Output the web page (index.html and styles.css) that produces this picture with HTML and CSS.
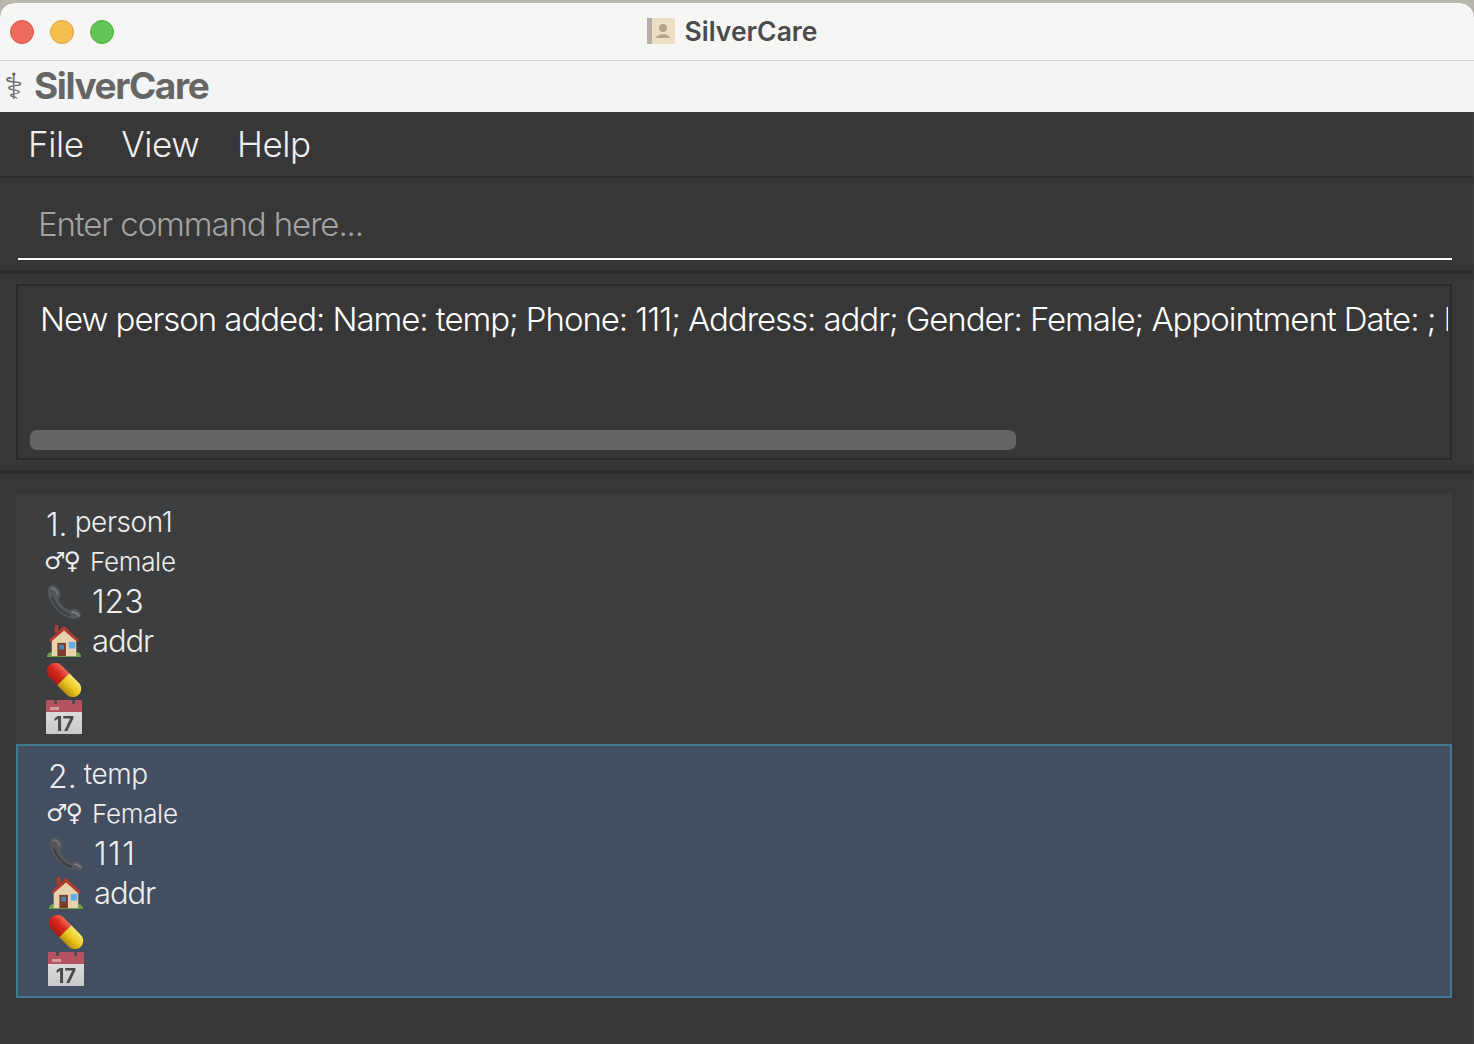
FILE: index.html
```html
<!DOCTYPE html>
<html lang="en">
<head>
<meta charset="utf-8">
<title>SilverCare</title>
<link rel="stylesheet" href="styles.css">
</head>
<body>
<svg class="defs" width="0" height="0" aria-hidden="true">
  <defs>
    <linearGradient id="pillRed" x1="0" y1="0" x2="0" y2="1">
      <stop offset="0" stop-color="#f0695a"/>
      <stop offset=".45" stop-color="#d8281c"/>
      <stop offset="1" stop-color="#a81a12"/>
    </linearGradient>
    <linearGradient id="pillYellow" x1="0" y1="0" x2="0" y2="1">
      <stop offset="0" stop-color="#f8e66a"/>
      <stop offset=".5" stop-color="#ecc81e"/>
      <stop offset="1" stop-color="#b58f12"/>
    </linearGradient>
    <linearGradient id="calBody" x1="0" y1="0" x2="0" y2="1">
      <stop offset="0" stop-color="#e4e4e4"/>
      <stop offset="1" stop-color="#c9c9c9"/>
    </linearGradient>
    <symbol id="phone" viewBox="0 0 36 36">
      <path d="M3 1 C7 -1 12 2 14 7 C15 11 13 14 12 16 C15 21 19 25 24 27 C26 25 29 24 32 26 C35 28 37 32 35 34 C32 37 26 36 21 34 C12 30 4 20 1 10 C0 6 1 3 3 1 Z" fill="#53565b"/>
      <path d="M4 4 C7 2 11 6 11 10" fill="none" stroke="#72757b" stroke-width="2"/>
      <path d="M5 12 C8 21 15 29 24 32" fill="none" stroke="#3c3e42" stroke-width="2.4"/>
      <path d="M26 29 C29 28 32 30 34 33" fill="none" stroke="#7b7e83" stroke-width="2"/>
    </symbol>
    <symbol id="house" viewBox="0 0 36 36">
      <path d="M0 35 C0 30 4 29 7 31 L29 31 C32 29 36 30 36 35 Z" fill="#6a9f4c"/>
      <path d="M5 16 L18 5 L31 16 L31 34 L5 34 Z" fill="#e8d2ad"/>
      <rect x="8" y="1" width="4" height="8" fill="#a8402f"/>
      <path d="M2 17 L18 2 L34 17 L32 19 L18 7 L4 19 Z" fill="#b23c2c"/>
      <rect x="11" y="20" width="9" height="14" fill="#7c3a28"/>
      <rect x="13" y="22" width="5" height="5" fill="#4b86b5"/>
      <rect x="23" y="19" width="7" height="7" fill="#62aee2"/>
    </symbol>
    <symbol id="pill" viewBox="0 0 36 36">
      <g transform="rotate(45 18 18)">
        <path d="M17 9 L5 9 C0 9 -4 13 -4 18 C-4 23 0 27 5 27 L17 27 Z" fill="url(#pillRed)"/>
        <path d="M17 9 L31 9 C36 9 40 13 40 18 C40 23 36 27 31 27 L17 27 Z" fill="url(#pillYellow)"/>
      </g>
    </symbol>
    <symbol id="calendar" viewBox="0 0 36 34">
      <rect x="0" y="0" width="36" height="34" fill="url(#calBody)"/>
      <rect x="0" y="0" width="36" height="12" fill="#b5525f"/>
      <rect x="8" y="0" width="3" height="4" fill="#5a4a4f"/>
      <rect x="26" y="0" width="3" height="4" fill="#5a4a4f"/>
      <rect x="4" y="7" width="9" height="3" fill="#d79aa2"/>
      <text x="18" y="31" text-anchor="middle" class="cal-num">17</text>
    </symbol>
  </defs>
</svg>
<div class="window">
  <header class="titlebar">
    <div class="lights">
      <span class="light light-red"></span>
      <span class="light light-yellow"></span>
      <span class="light light-green"></span>
    </div>
    <div class="title">
      <svg class="title-icon" viewBox="0 0 28 26" aria-hidden="true">
        <rect width="28" height="26" rx="1" fill="#ecdfc4"/>
        <rect width="5" height="26" fill="#b4b0a9"/>
        <circle cx="16" cy="10" r="4" fill="#b3a78f"/>
        <path d="M9 20 C10 15 22 15 23 20 Z" fill="#b3a78f"/>
      </svg>
      <span class="title-text">SilverCare</span>
    </div>
  </header>
  <div class="appbar">
    <span class="appbar-icon">⚕</span>
    <span class="appbar-name">SilverCare</span>
  </div>
  <main class="app">
    <nav class="menu">
      <span class="menu-item">File</span>
      <span class="menu-item">View</span>
      <span class="menu-item">Help</span>
    </nav>
    <section class="command">
      <div class="command-field">Enter command here...</div>
    </section>
    <section class="result">
      <div class="result-box">
        <div class="result-text">New person added: Name: temp; Phone: 111; Address: addr; Gender: Female; Appointment Date: ; Medicine: ; Tags:</div>
        <div class="scrollthumb"></div>
      </div>
    </section>
    <section class="list">
      <article class="card">
        <div class="row row-name"><span class="index">1.</span><span>person1</span></div>
        <div class="row row-gender"><span class="gender">♂♀</span><span>Female</span></div>
        <div class="row row-field"><svg class="emoji"><use href="#phone"/></svg><span>123</span></div>
        <div class="row row-field"><svg class="emoji"><use href="#house"/></svg><span class="addr">addr</span></div>
        <div class="row row-field"><svg class="emoji"><use href="#pill"/></svg></div>
        <div class="row row-cal"><svg class="emoji"><use href="#calendar"/></svg></div>
      </article>
      <article class="card card-selected">
        <div class="row row-name"><span class="index">2.</span><span>temp</span></div>
        <div class="row row-gender"><span class="gender">♂♀</span><span>Female</span></div>
        <div class="row row-field"><svg class="emoji"><use href="#phone"/></svg><span class="ones">111</span></div>
        <div class="row row-field"><svg class="emoji"><use href="#house"/></svg><span class="addr">addr</span></div>
        <div class="row row-field"><svg class="emoji"><use href="#pill"/></svg></div>
        <div class="row row-cal"><svg class="emoji"><use href="#calendar"/></svg></div>
      </article>
    </section>
  </main>
</div>
</body>
</html>
```
FILE: styles.css
```css
* { box-sizing: border-box; }
html, body { margin: 0; padding: 0; }
body {
  width: 1474px;
  height: 1044px;
  overflow: hidden;
  background: #b9b6ae;
  font-family: "Inter", "Liberation Sans", sans-serif;
}
.defs { display: block; height: 0; }
.cal-num { font: 700 20px "Inter", sans-serif; fill: #4a4a4a; }
.window {
  height: 1041px;
  margin-top: 3px;
  display: flex;
  flex-direction: column;
  background: #373737;
  border-radius: 14px 14px 0 0;
  overflow: hidden;
}
.titlebar {
  height: 58px;
  flex: none;
  display: flex;
  align-items: center;
  justify-content: center;
  background: #f6f6f4;
  border-bottom: 1px solid #cfcfcd;
  position: relative;
}
.lights {
  position: absolute;
  left: 10px;
  top: 17px;
  display: flex;
  gap: 16px;
}
.light { width: 24px; height: 24px; border-radius: 50%; border: 1px solid; }
.light-red { background: #ee6a5f; border-color: #d6544a; }
.light-yellow { background: #f6bd4f; border-color: #dea13a; }
.light-green { background: #61c454; border-color: #4fae43; }
.title { display: flex; align-items: center; gap: 10px; margin-top: -2px; padding-right: 10px; }
.title-icon { width: 28px; height: 26px; }
.title-text { font-size: 26.5px; font-weight: 600; color: #4b4b4b; }
.appbar {
  height: 51px;
  flex: none;
  display: flex;
  align-items: center;
  background: #f4f4f4;
  color: #666;
}
.appbar-icon { width: 34px; padding-left: 4px; font: 36px "DejaVu Sans", sans-serif; white-space: nowrap; overflow: hidden; }
.appbar-name { font-size: 37px; font-weight: 700; letter-spacing: -1.4px; margin-top: -2px; }
.app { flex: 1; display: flex; flex-direction: column; min-height: 0; border-right: 1px solid #3e3e3e; }
.menu {
  height: 66px;
  flex: none;
  display: flex;
  align-items: center;
  gap: 37.5px;
  padding: 0 0 1px 28px;
  background: #373737;
  border-bottom: 2px solid #2b2b2b;
}
.menu-item { font-size: 35px; font-weight: 300; color: #eee; letter-spacing: -.4px; }
.command {
  height: 96px;
  flex: none;
  padding: 0 21px 10px 18px;
  display: flex;
  border-bottom: 4px solid #2b2b2b;
}
.command-field {
  flex: 1;
  display: flex;
  align-items: center;
  padding: 12px 0 0 20px;
  border-bottom: 2px solid #fff;
  color: #a3a3a3;
  font-size: 33px;
  font-weight: 300;
  letter-spacing: -1.1px;
}
.result {
  height: 200px;
  flex: none;
  padding: 10px 21px 10px 16px;
  border-bottom: 4px solid #2b2b2b;
}
.result-box {
  height: 176px;
  position: relative;
  border: 2px solid #2b2b2b;
  padding: 10px 2px 0 22px;
}
.result-text {
  white-space: nowrap;
  overflow: hidden;
  color: #fff;
  font-size: 33px;
  font-weight: 300;
  letter-spacing: -1.05px;
  line-height: 46px;
}
.scrollthumb {
  position: absolute;
  left: 12px;
  top: 144px;
  width: 986px;
  height: 20px;
  border-radius: 7px;
  background: #646464;
}
.list {
  flex: 1;
  padding: 20px 21px 0 16px;
  display: flex;
  flex-direction: column;
}
.card {
  height: 250px;
  padding: 3px 0 0 30px;
  background: #3c3e40;
  color: #eee;
}
.card-selected {
  height: 254px;
  padding: 3px 0 0 30px;
  background: #434e60;
  border: 2px solid #3e7b91;
}
.row { display: flex; align-items: center; font-weight: 300; }
.row-name { height: 45px; padding-top: 4px; gap: 7px; font-size: 28px; letter-spacing: -.4px; }
.index { font-size: 32px; margin-top: 5px; letter-spacing: 0; }
.row-gender { height: 40px; padding-bottom: 2px; gap: 10px; font-size: 26px; letter-spacing: -.3px; }
.gender { font: 24px "DejaVu Sans", sans-serif; letter-spacing: -2px; width: 36px; margin-left: -2px; white-space: nowrap; }
.row-field { height: 39px; gap: 10px; font-size: 32px; }
.row-cal { height: 36px; }
.ones { letter-spacing: 1.5px; }
.addr { font-size: 31px; letter-spacing: -1.1px; }
.emoji { width: 36px; height: 34px; flex: none; display: block; filter: blur(.3px); }
```
